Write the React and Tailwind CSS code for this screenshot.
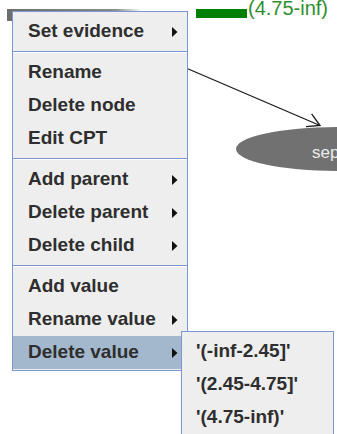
const sections = [
  [{ label: "Set evidence", sub: true }],
  [
    { label: "Rename" },
    { label: "Delete node" },
    { label: "Edit CPT" },
  ],
  [
    { label: "Add parent", sub: true },
    { label: "Delete parent", sub: true },
    { label: "Delete child", sub: true },
  ],
  [
    { label: "Add value" },
    { label: "Rename value", sub: true },
    { label: "Delete value", sub: true, active: true },
  ],
];

const values = ["'(-inf-2.45]'", "'(2.45-4.75]'", "'(4.75-inf)'"];

const Arrow = () => (
  <svg width="6" height="10" viewBox="0 0 6 10" className="shrink-0">
    <path d="M0 0 L5.5 5 L0 10 Z" fill="#111" />
  </svg>
);

const MenuItem = ({ label, sub, active }) => (
  <div
    className={`flex h-[33px] items-center justify-between pl-[15px] pr-[9px] ${
      active ? "bg-[#a3b8cc]" : ""
    }`}
  >
    <span>{label}</span>
    {sub && <Arrow />}
  </div>
);

const Separator = () => (
  <div className="py-[3px]">
    <div className="h-px bg-[#7b97d0]" />
    <div className="h-px bg-white" />
  </div>
);

const App = () => {
  return (
    <div className="relative h-[434px] w-[337px] overflow-hidden bg-white font-['Liberation_Sans',Arial,sans-serif]">
      {/* graph canvas behind the popup */}
      <svg width="337" height="434" className="absolute left-0 top-0">
        <defs>
          <linearGradient id="fade" x1="0" x2="1" y1="0" y2="0">
            <stop offset="0" stopColor="#6e6e6e" />
            <stop offset="0.8" stopColor="#8a8a8a" />
            <stop offset="1" stopColor="#8a8a8a" stopOpacity="0" />
          </linearGradient>
        </defs>
        <rect x="7" y="9" width="135" height="3" fill="url(#fade)" />
        <rect x="7" y="9" width="5" height="12" fill="#6e6e6e" />
        <rect x="196" y="9" width="51" height="9" fill="#008000" />
        <text x="248" y="15" fontSize="20" fill="#2f8f2f" fontFamily="Liberation Sans, Arial, sans-serif">
          (4.75-inf)
        </text>
        <ellipse cx="337" cy="149" rx="101" ry="22" fill="#717171" />
        <text x="312" y="158" fontSize="17" fill="#ececec" fontFamily="Liberation Sans, Arial, sans-serif">
          sep
        </text>
        <line x1="186" y1="68" x2="320" y2="125.5" stroke="#1a1a1a" strokeWidth="1.3" />
        <path d="M311.6 113.8 L320 125.5 L306 126.6" fill="none" stroke="#1a1a1a" strokeWidth="1.3" />
      </svg>

      {/* popup menu */}
      <div className="absolute left-[12px] top-[11px] w-[176px] border border-[#7b97d0] bg-[#eeeeee] pb-[1px] pt-[3px] text-[19px] font-bold text-[#2e2e2e]">
        {sections.map((items, i) => (
          <div key={i}>
            {i > 0 && <Separator />}
            {items.map((item) => (
              <MenuItem key={item.label} {...item} />
            ))}
          </div>
        ))}
      </div>

      {/* value submenu */}
      <div className="absolute left-[181px] top-[331px] w-[153px] border border-[#7b97d0] bg-[#eeeeee] pt-[3px] text-[19px] font-bold text-[#2e2e2e]">
        {values.map((v) => (
          <div key={v} className="flex h-[33px] items-center pl-[14px]">
            {v}
          </div>
        ))}
        <div className="h-[10px]" />
      </div>
    </div>
  );
};

export default App;
